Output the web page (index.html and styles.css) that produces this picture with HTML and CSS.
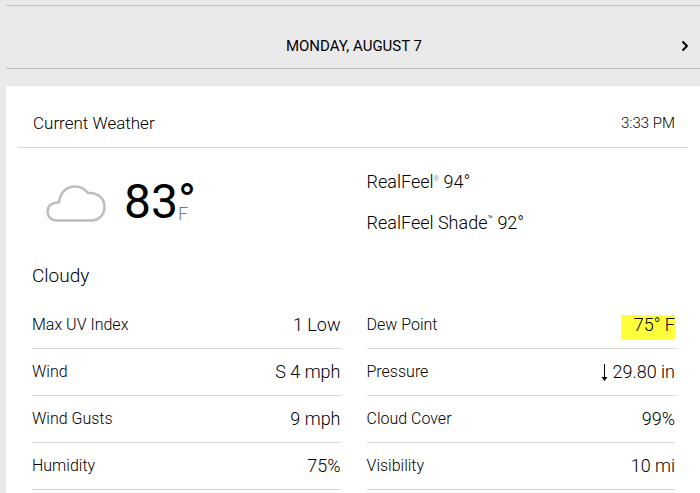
FILE: index.html
```
<!DOCTYPE html>
<html lang="en">
<head>
  <meta charset="UTF-8" />
  <meta name="viewport" content="width=device-width, initial-scale=1" />
  <title>Current Weather</title>
  <link rel="stylesheet" href="styles.css">
</head>
<body>
  <nav class="day-nav">
    <span class="day">MONDAY, AUGUST 7</span>
    <button class="next" type="button" aria-label="Next day">
      <svg width="8" height="12" viewBox="0 0 8 12"><path d="M1.5 1.5 L6 6 L1.5 10.5" fill="none" stroke="#000" stroke-width="2"/></svg>
    </button>
  </nav>

  <main class="card">
    <header class="card-header">
      <h1>Current Weather</h1>
      <span class="time">3:33 PM</span>
    </header>

    <section class="summary">
      <div class="current">
        <svg class="icon" width="60" height="38" viewBox="0 0 60 38"><path d="M11 35.5 C5 35.5 1.5 31.5 1.5 26.5 C1.5 21 6 17 13 17.5 C14 8 20 1.5 29 1.5 C35 1.5 39 4 42 8 C51 7 58.5 13 58.5 21.5 C58.5 30 53 35.5 45 35.5 Z" fill="none" stroke="#bdbdbd" stroke-width="2.5" stroke-linejoin="round"/></svg>
        <div class="temp">83°<span class="unit">F</span></div>
      </div>
      <div class="realfeel">
        <p>RealFeel<sup class="reg">®</sup> 94°</p>
        <p>RealFeel Shade<sup>™</sup> 92°</p>
      </div>
      <p class="phrase">Cloudy</p>
    </section>

    <section class="details">
      <dl>
        <div class="row"><dt>Max UV Index</dt><dd>1 Low</dd></div>
        <div class="row"><dt>Wind</dt><dd>S 4 mph</dd></div>
        <div class="row"><dt>Wind Gusts</dt><dd>9 mph</dd></div>
        <div class="row"><dt>Humidity</dt><dd>75%</dd></div>
      </dl>
      <dl>
        <div class="row"><dt>Dew Point</dt><dd class="highlight">75° F</dd></div>
        <div class="row"><dt>Pressure</dt><dd><svg class="arrow" width="8" height="17" viewBox="0 0 8 17"><path d="M4.5 0 V15" fill="none" stroke="#000"/><path d="M1.5 13 H7.5 L4.5 17 Z" fill="#000"/></svg> 29.80 in</dd></div>
        <div class="row"><dt>Cloud Cover</dt><dd>99%</dd></div>
        <div class="row"><dt>Visibility</dt><dd>10 mi</dd></div>
      </dl>
    </section>
  </main>
</body>
</html>
```
FILE: styles.css
```
* {
  box-sizing: border-box;
}
body {
  margin: 0;
  padding: 5px 0 0 6px;
  background-color: #eaeaea;
  color: #000;
  font-family: Roboto, "Liberation Sans", sans-serif;
  font-weight: 300;
  overflow: hidden;
}
h1, p, dl, dd {
  margin: 0;
  font-weight: 300;
}
.day-nav {
  display: grid;
  grid-template-columns: 1fr auto 1fr;
  align-items: center;
  height: 64px;
  padding: 18px 11px 0 13px;
  border-top: 1px solid #bdbdbd;
  border-bottom: 1px solid #bdbdbd;
}
.day {
  grid-column: 2;
  font-size: 15px;
  font-weight: 400;
}
.next {
  display: flex;
  justify-self: end;
  padding: 0;
  border: none;
  background: none;
  cursor: pointer;
}
.card {
  margin-top: 17px;
  padding: 0 12px 16px;
  background-color: #fff;
}
.card-header {
  display: flex;
  justify-content: space-between;
  align-items: center;
  height: 62px;
  padding: 12px 13px 0 15px;
  border-bottom: 1px solid #d8d8d8;
}
.card-header h1 {
  font-size: 17px;
}
.time {
  font-size: 15px;
}
.summary,
.details {
  display: grid;
  grid-template-columns: 1fr 1fr;
  column-gap: 26px;
  padding: 0 13px 0 14px;
}
.summary {
  padding-top: 20px;
}
.current {
  display: flex;
  align-items: center;
  gap: 18px;
  height: 72px;
  padding-left: 14px;
}
.temp {
  display: flex;
  align-items: flex-end;
  padding-bottom: 4px;
  font-size: 48px;
  font-weight: 400;
  line-height: 56px;
}
.unit {
  margin-left: -18px;
  color: #777;
  font-size: 18px;
  font-weight: 300;
  line-height: 32px;
}
.realfeel {
  font-size: 18px;
}
.realfeel p {
  height: 41px;
  line-height: 28px;
}
sup {
  font-size: 9px;
  line-height: 1;
}
.reg {
  color: #777;
  font-size: 7px;
}
.phrase {
  font-size: 19px;
  line-height: 28px;
  margin-top: 12px;
}
.details {
  padding-top: 12px;
}
.row {
  display: flex;
  justify-content: space-between;
  align-items: center;
  height: 47px;
  padding-top: 5px;
  border-bottom: 1px solid #d8d8d8;
}
.row dt,
.row dd {
  padding-bottom: 5px;
  font-size: 16px;
  line-height: 20px;
}
.row dd {
  font-size: 18px;
}
.row .highlight {
  padding-left: 13px;
  background-color: #ffff3c;
}
.arrow {
  vertical-align: -3px;
}
```
